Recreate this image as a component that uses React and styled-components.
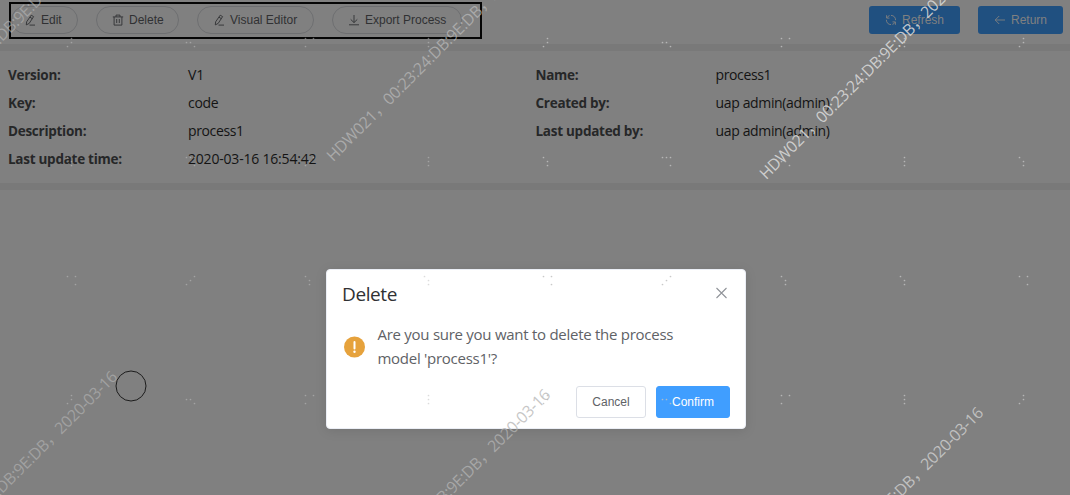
import React from "react";
import styled, { createGlobalStyle } from "styled-components";

const Global = createGlobalStyle`
  * { box-sizing: border-box; }
  html, body { margin: 0; padding: 0; }
  body { background: #808080; overflow: hidden; font-family: "Open Sans", "Noto Sans", sans-serif; font-size: 14px; }
`;

const Page = styled.div`
  position: relative;
  width: 1070px;
  height: 495px;
  overflow: hidden;
  background: #808080;
  display: flex;
  flex-direction: column;
`;
const Toolbar = styled.div`
  height: 51px;
  border-bottom: 7px solid #797979;
  display: flex;
  justify-content: space-between;
  align-items: flex-start;
  padding: 2px 7px 0 9px;
`;
const ActionGroup = styled.div`
  width: 473px;
  height: 37px;
  border: 2px solid #050505;
  display: flex;
  gap: 18px;
  padding-top: 2px;
`;
const PillButton = styled.button`
  width: ${(p) => p.$w}px;
  height: 28px;
  margin: 0;
  padding: 0 0 0 ${(p) => p.$pad}px;
  border: 1px solid #6e6f71;
  border-radius: 14px;
  background: transparent;
  color: #303133;
  font: 12px/26px "Liberation Sans", sans-serif;
  display: flex;
  align-items: center;
  gap: 5px;
  white-space: nowrap;
`;
const PrimaryGroup = styled.div`
  display: flex;
  gap: 18px;
  padding-top: 4px;
`;
const PrimaryButton = styled.button`
  width: ${(p) => p.$w}px;
  height: 28px;
  border: 0;
  border-radius: 3px;
  background: #205080;
  color: #808080;
  font: 12px/28px "Liberation Sans", sans-serif;
  display: flex;
  align-items: center;
  gap: 5px;
  padding: 0 0 0 16px;
`;
const Details = styled.dl`
  margin: 0;
  height: 139px;
  padding: 10px 0 0 8px;
  border-bottom: 7px solid #797979;
  display: grid;
  grid-template-columns: 527.5px 1fr;
  grid-auto-rows: 28px;
`;
const Field = styled.div`
  display: flex;
  line-height: 28px;
`;
const Label = styled.dt`
  width: 180px;
  font-weight: 700;
  font-size: 13.5px;
  color: #262728;
  letter-spacing: -0.27px;
`;
const Value = styled.dd`
  margin: 0;
  color: #141414;
  letter-spacing: ${(p) => p.$ls}px;
`;
const Canvas = styled.div`
  flex: 1;
`;
const Diagram = styled.svg`
  display: block;
`;
const Dialog = styled.section`
  position: absolute;
  left: 326px;
  top: 269px;
  width: 420px;
  height: 160px;
  background: #fff;
  border: 1px solid #ebeef5;
  border-radius: 4px;
  box-shadow: 0 2px 12px rgba(0, 0, 0, 0.1);
  display: flex;
  flex-direction: column;
  padding: 11px 15px 10px;
`;
const DialogHead = styled.header`
  display: flex;
  justify-content: space-between;
  align-items: flex-start;
  height: 26px;
  padding-right: 2px;
`;
const CloseIcon = styled.svg`
  display: block;
  margin-top: 6px;
`;
const Title = styled.h2`
  margin: 0;
  font-size: 19px;
  line-height: 26px;
  font-weight: 400;
  color: #303133;
  letter-spacing: -0.4px;
`;
const DialogBody = styled.div`
  display: flex;
  align-items: center;
  gap: 12.5px;
  margin-top: 15px;
  padding-left: 1px;
`;
const WarningIcon = styled.svg`
  flex: none;
  position: relative;
  top: 1px;
`;
const Message = styled.p`
  margin: 0;
  font-size: 15px;
  line-height: 24px;
  color: #606266;
  letter-spacing: -0.27px;
`;
const MessageLine = styled.span`
  display: block;
`;
const DialogFoot = styled.footer`
  display: flex;
  justify-content: flex-end;
  gap: 10px;
  margin-top: auto;
`;
const DialogButton = styled.button`
  width: ${(p) => (p.$primary ? 74 : 70)}px;
  height: 32px;
  padding: 0;
  border: 1px solid ${(p) => (p.$primary ? "#409eff" : "#dcdfe6")};
  border-radius: 3px;
  background: ${(p) => (p.$primary ? "#409eff" : "#fff")};
  color: ${(p) => (p.$primary ? "#fff" : "#606266")};
  font: 12px/30px "Liberation Sans", sans-serif;
`;
const Overlay = styled.div`
  position: absolute;
  inset: 0;
  pointer-events: none;
`;
const Mark = styled.span`
  position: absolute;
  left: ${(p) => p.$x}px;
  top: ${(p) => p.$y}px;
  line-height: 20px;
  font-family: "Open Sans", "Noto Sans CJK SC", sans-serif;
  font-size: 16px;
  color: ${(p) => p.$color};
  white-space: pre;
  transform: translateY(-20px) rotate(-45deg);
  transform-origin: 0 100%;
  letter-spacing: -0.3px;
`;
const Dots = styled.svg`
  position: absolute;
  inset: 0;
`;
const Glyph = styled.svg`
  flex: none;
  display: block;
  fill: none;
  stroke: currentColor;
`;

const Icon = ({ d }) => (
  <Glyph width="12" height="12" viewBox="0 0 12 12" strokeWidth="0.9">
    <path d={d} />
  </Glyph>
);
const EDIT = "M7.2 1.2 9.6 2.6 5.2 9.4 2.3 10.9 2.6 7.9ZM6 3.2 8.3 4.7M5.5 11.1H11";
const TRASH = "M.8 2.9H11.2M4 2.8V1.1H8V2.8M2.1 3V11.1H9.9V3M4.7 5V9M7.3 5V9";
const DOWNLOAD = "M6 1V8.4M2.7 5.4 6 8.6 9.3 5.4M1 10.8H11";
const REFRESH =
  "M1.6 1.2V4.1H4.5M1.7 4A4.7 4.7 0 0 1 4.6 1.6M6 1.4C8.8 1.4 10.6 3.4 10.6 6.2M10.4 10.8V7.9H7.5M10.3 8A4.7 4.7 0 0 1 7.4 10.4M6 10.6C3.2 10.6 1.4 8.6 1.4 5.8";
const BACK = "M11 6H1.3M5.2 2 1.2 6 5.2 10";

const actions = [
  { text: "Edit", icon: EDIT, w: 67, pad: 12 },
  { text: "Delete", icon: TRASH, w: 83, pad: 15 },
  { text: "Visual Editor", icon: EDIT, w: 117, pad: 15 },
  { text: "Export Process", icon: DOWNLOAD, w: 130, pad: 15 },
];

const fields = [
  ["Version:", "V1", 0],
  ["Name:", "process1", -0.37],
  ["Key:", "code", -0.3],
  ["Created by:", "uap admin(admin)", -0.35],
  ["Description:", "process1", -0.37],
  ["Last updated by:", "uap admin(admin)", -0.35],
  ["Last update time:", "2020-03-16 16:54:42", -0.2],
];

const MARK = "HDW021,00:23:24:DB:9E:DB,2020-03-16";
const marks = [
  { x: -97, y: 147, color: "rgba(184, 184, 184, 0.6)" },
  { x: 336, y: 165, color: "rgba(184, 184, 184, 0.75)" },
  { x: 769, y: 183, color: "rgba(215, 215, 215, 0.9)" },
  { x: -97, y: 599, color: "rgba(184, 184, 184, 0.6)" },
  { x: 336, y: 617, color: "rgba(180, 180, 180, 0.75)" },
  { x: 769, y: 635, color: "rgba(205, 205, 205, 0.85)" },
];

const shapes = {
  slash: [[4, 0], [4, 4], [0, 8]],
  diag: [[8, 0], [4, 4], [0, 8]],
  flat: [[0, 4], [4, 4], [8, 8]],
  left: [[0, 0], [8, 0], [0, 8]],
  right: [[0, 0], [8, 0], [8, 8]],
  bar: [[4, 0], [4, 4], [4, 8]],
  hook: [[0, 0], [4, 4], [4, 8]],
  top: [[0, 0], [4, 0], [8, 0], [8, 8]],
};
const clusterRows = [
  [38, ["slash", "flat", "left", "bar", "slash", "flat", "left", "bar", "slash"]],
  [157, ["hook", "top", "diag", "bar", "hook", "top", "flat", "bar", "hook"]],
  [276, ["right", "diag", "hook", "hook", "right", "diag", "hook", "hook", "right"]],
  [395, ["slash", "flat", "left", "bar", "slash", "flat", "left", "bar", "slash"]],
];

function Watermark() {
  return (
    <Overlay>
      <Dots width="1070" height="495">
        {clusterRows.map(([y, names], r) =>
          names.map((name, i) =>
            shapes[name].map(([dx, dy], k) => (
              <circle
                key={`${r}-${i}-${k}`}
                cx={67.5 + i * 119 + dx}
                cy={y + 0.5 + dy}
                r="0.85"
                fill="#c0c0c0"
                fillOpacity={i > 3 ? 0.85 : 0.55}
              />
            ))
          )
        )}
      </Dots>
      {marks.map((m) => (
        <Mark key={`${m.x},${m.y}`} $x={m.x} $y={m.y} $color={m.color}>
          {MARK.replaceAll(",", "\uff0c")}
        </Mark>
      ))}
    </Overlay>
  );
}

export default function App() {
  return (
    <Page>
      <Global />
      <Toolbar>
        <ActionGroup>
          {actions.map((a) => (
            <PillButton key={a.text} $w={a.w} $pad={a.pad}>
              <Icon d={a.icon} />
              {a.text}
            </PillButton>
          ))}
        </ActionGroup>
        <PrimaryGroup>
          <PrimaryButton $w={91}><Icon d={REFRESH} />Refresh</PrimaryButton>
          <PrimaryButton $w={85}><Icon d={BACK} />Return</PrimaryButton>
        </PrimaryGroup>
      </Toolbar>
      <Details>
        {fields.map(([label, value, ls]) => (
          <Field key={label}>
            <Label>{label}</Label>
            <Value $ls={ls}>{value}</Value>
          </Field>
        ))}
      </Details>
      <Canvas>
        <Diagram width="1070" height="305">
          <circle cx="131" cy="196" r="15" fill="none" stroke="#1c1c1c" />
        </Diagram>
      </Canvas>
      <Dialog>
        <DialogHead>
          <Title>Delete</Title>
          <CloseIcon width="12" height="12" viewBox="0 0 12 12" stroke="#909399" strokeWidth="1.1">
            <path d="M.5 1 10.5 11M10.5 1 .5 11" />
          </CloseIcon>
        </DialogHead>
        <DialogBody>
          <WarningIcon width="22" height="22" viewBox="0 0 22 22">
            <circle cx="11.5" cy="11" r="10.5" fill="#e6a23c" />
            <path d="M11.5 6V12.4" stroke="#fff" strokeWidth="2" strokeLinecap="round" />
            <circle cx="11.5" cy="15.8" r="1.2" fill="#fff" />
          </WarningIcon>
          <Message>
            <MessageLine>Are you sure you want to delete the process</MessageLine>
            <MessageLine>model 'process1'?</MessageLine>
          </Message>
        </DialogBody>
        <DialogFoot>
          <DialogButton>Cancel</DialogButton>
          <DialogButton $primary>Confirm</DialogButton>
        </DialogFoot>
      </Dialog>
      <Watermark />
    </Page>
  );
}
